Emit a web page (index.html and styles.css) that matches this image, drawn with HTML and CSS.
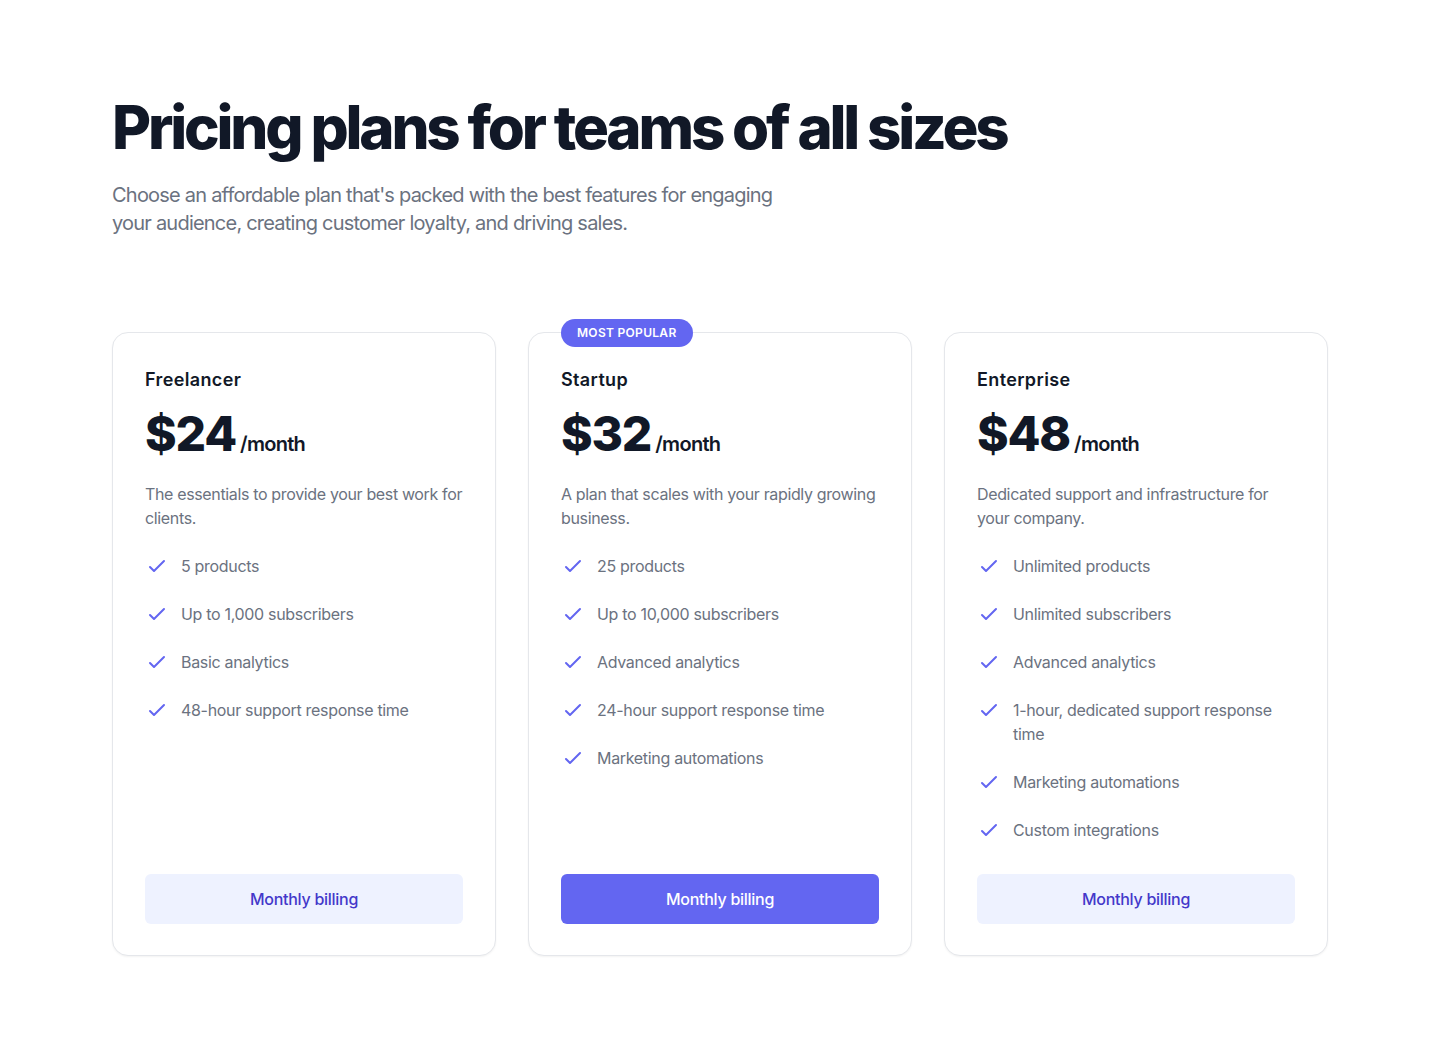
FILE: index.html
```html
<!DOCTYPE html>
<html lang="en">
<head>
<meta charset="utf-8">
<title>Pricing</title>
<link rel="stylesheet" href="styles.css">
</head>
<body>
<div class="page">
  <h1 class="title">Pricing plans for teams of all sizes</h1>
  <p class="subtitle">Choose an affordable plan that's packed with the best features for engaging your audience, creating customer loyalty, and driving sales.</p>

  <div class="plans">
    <div class="card">
      <div class="card-body">
        <h3 class="plan-name">Freelancer</h3>
        <p class="price"><span class="amount">$24</span><span class="per">/month</span></p>
        <p class="desc">The essentials to provide your best work for clients.</p>
        <ul class="features">
          <li><svg class="check" viewBox="0 0 24 24" fill="none" stroke="currentColor" stroke-width="2"><path stroke-linecap="round" stroke-linejoin="round" d="M5 13l4 4L19 7"/></svg><span>5 products</span></li>
          <li><svg class="check" viewBox="0 0 24 24" fill="none" stroke="currentColor" stroke-width="2"><path stroke-linecap="round" stroke-linejoin="round" d="M5 13l4 4L19 7"/></svg><span>Up to 1,000 subscribers</span></li>
          <li><svg class="check" viewBox="0 0 24 24" fill="none" stroke="currentColor" stroke-width="2"><path stroke-linecap="round" stroke-linejoin="round" d="M5 13l4 4L19 7"/></svg><span>Basic analytics</span></li>
          <li><svg class="check" viewBox="0 0 24 24" fill="none" stroke="currentColor" stroke-width="2"><path stroke-linecap="round" stroke-linejoin="round" d="M5 13l4 4L19 7"/></svg><span>48-hour support response time</span></li>
        </ul>
      </div>
      <a href="#" class="btn btn-light">Monthly billing</a>
    </div>

    <div class="card">
      <p class="badge">Most popular</p>
      <div class="card-body">
        <h3 class="plan-name">Startup</h3>
        <p class="price"><span class="amount">$32</span><span class="per">/month</span></p>
        <p class="desc">A plan that scales with your rapidly growing business.</p>
        <ul class="features">
          <li><svg class="check" viewBox="0 0 24 24" fill="none" stroke="currentColor" stroke-width="2"><path stroke-linecap="round" stroke-linejoin="round" d="M5 13l4 4L19 7"/></svg><span>25 products</span></li>
          <li><svg class="check" viewBox="0 0 24 24" fill="none" stroke="currentColor" stroke-width="2"><path stroke-linecap="round" stroke-linejoin="round" d="M5 13l4 4L19 7"/></svg><span>Up to 10,000 subscribers</span></li>
          <li><svg class="check" viewBox="0 0 24 24" fill="none" stroke="currentColor" stroke-width="2"><path stroke-linecap="round" stroke-linejoin="round" d="M5 13l4 4L19 7"/></svg><span>Advanced analytics</span></li>
          <li><svg class="check" viewBox="0 0 24 24" fill="none" stroke="currentColor" stroke-width="2"><path stroke-linecap="round" stroke-linejoin="round" d="M5 13l4 4L19 7"/></svg><span>24-hour support response time</span></li>
          <li><svg class="check" viewBox="0 0 24 24" fill="none" stroke="currentColor" stroke-width="2"><path stroke-linecap="round" stroke-linejoin="round" d="M5 13l4 4L19 7"/></svg><span>Marketing automations</span></li>
        </ul>
      </div>
      <a href="#" class="btn btn-primary">Monthly billing</a>
    </div>

    <div class="card">
      <div class="card-body">
        <h3 class="plan-name">Enterprise</h3>
        <p class="price"><span class="amount">$48</span><span class="per">/month</span></p>
        <p class="desc">Dedicated support and infrastructure for your company.</p>
        <ul class="features">
          <li><svg class="check" viewBox="0 0 24 24" fill="none" stroke="currentColor" stroke-width="2"><path stroke-linecap="round" stroke-linejoin="round" d="M5 13l4 4L19 7"/></svg><span>Unlimited products</span></li>
          <li><svg class="check" viewBox="0 0 24 24" fill="none" stroke="currentColor" stroke-width="2"><path stroke-linecap="round" stroke-linejoin="round" d="M5 13l4 4L19 7"/></svg><span>Unlimited subscribers</span></li>
          <li><svg class="check" viewBox="0 0 24 24" fill="none" stroke="currentColor" stroke-width="2"><path stroke-linecap="round" stroke-linejoin="round" d="M5 13l4 4L19 7"/></svg><span>Advanced analytics</span></li>
          <li><svg class="check" viewBox="0 0 24 24" fill="none" stroke="currentColor" stroke-width="2"><path stroke-linecap="round" stroke-linejoin="round" d="M5 13l4 4L19 7"/></svg><span>1-hour, dedicated support response time</span></li>
          <li><svg class="check" viewBox="0 0 24 24" fill="none" stroke="currentColor" stroke-width="2"><path stroke-linecap="round" stroke-linejoin="round" d="M5 13l4 4L19 7"/></svg><span>Marketing automations</span></li>
          <li><svg class="check" viewBox="0 0 24 24" fill="none" stroke="currentColor" stroke-width="2"><path stroke-linecap="round" stroke-linejoin="round" d="M5 13l4 4L19 7"/></svg><span>Custom integrations</span></li>
        </ul>
      </div>
      <a href="#" class="btn btn-light">Monthly billing</a>
    </div>
  </div>
</div>
</body>
</html>
```

FILE: styles.css
```css
* { box-sizing: border-box; }
html, body { margin: 0; padding: 0; background: #ffffff; }
body {
  font-family: Inter, "Noto Sans", "Liberation Sans", sans-serif;
  color: #111827;
  -webkit-font-smoothing: antialiased;
}
p, h1, h3, ul { margin: 0; padding: 0; }

.page {
  max-width: 1280px;
  margin: 0 auto;
  padding: 97px 32px 96px;
}

.title {
  font-size: 60px;
  line-height: 1;
  font-weight: 800;
  letter-spacing: -0.053em;
  color: #111827;
}

.subtitle {
  margin-top: 24px;
  max-width: 672px;
  font-size: 20px;
  line-height: 28px;
  letter-spacing: -0.039em;
  color: #6b7280;
}

.plans {
  margin-top: 95px;
  display: grid;
  grid-template-columns: repeat(3, 1fr);
  column-gap: 32px;
}

.card {
  position: relative;
  display: flex;
  flex-direction: column;
  padding: 33px 32px 31px;
  background: #ffffff;
  border: 1px solid #e5e7eb;
  border-radius: 16px;
  box-shadow: 0 1px 2px 0 rgba(0, 0, 0, 0.05);
}

.card-body { flex: 1; }

.badge {
  position: absolute;
  top: 0;
  left: 32px;
  transform: translateY(-50%);
  padding: 6px 16px;
  background: #6366f1;
  border-radius: 9999px;
  font-size: 12px;
  line-height: 16px;
  font-weight: 600;
  text-transform: uppercase;
  letter-spacing: 0.025em;
  color: #ffffff;
}

.plan-name {
  font-size: 18px;
  line-height: 28px;
  font-weight: 600;
  letter-spacing: 0.02em;
  color: #111827;
}

.price {
  margin-top: 16px;
  display: flex;
  align-items: baseline;
  color: #111827;
}
.amount {
  font-size: 48px;
  line-height: 1;
  font-weight: 800;
  letter-spacing: -0.025em;
}
.per {
  margin-left: 4px;
  font-size: 20px;
  line-height: 28px;
  font-weight: 600;
  letter-spacing: -0.035em;
}

.desc {
  margin-top: 24px;
  font-size: 16px;
  line-height: 24px;
  letter-spacing: -0.022em;
  color: #6b7280;
}

.features {
  margin-top: 24px;
  list-style: none;
  display: flex;
  flex-direction: column;
  gap: 24px;
}
.features li {
  display: flex;
  font-size: 16px;
  line-height: 24px;
  letter-spacing: -0.02em;
  color: #6b7280;
}
.check {
  flex-shrink: 0;
  width: 24px;
  height: 24px;
  color: #6366f1;
}
.features span { margin-left: 12px; }

.btn {
  margin-top: 32px;
  display: block;
  width: 100%;
  padding: 12px 24px;
  border: 1px solid transparent;
  border-radius: 6px;
  text-align: center;
  font-size: 16px;
  line-height: 24px;
  font-weight: 500;
  letter-spacing: -0.017em;
  text-decoration: none;
}
.btn-light { background: #eef2ff; color: #4338ca; }
.btn-primary { background: #6366f1; color: #ffffff; }
```
